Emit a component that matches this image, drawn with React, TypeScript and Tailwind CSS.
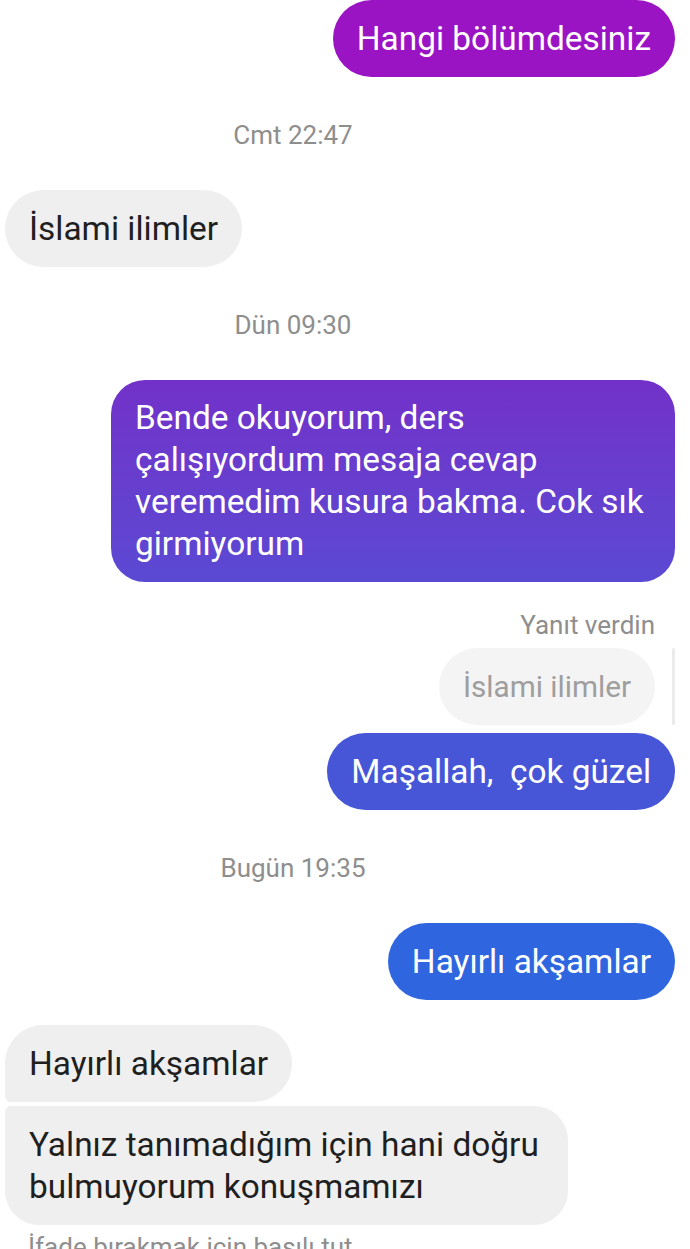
import React from "react";

function Stamp({ children }: { children: React.ReactNode }) {
  return (
    <div className="h-[113px] shrink-0 w-[586px] flex items-center justify-center text-[26px] leading-[30px] pt-[2px] text-[#8e8e8e]">
      {children}
    </div>
  );
}

export default function App() {
  return (
    <div
      className="w-[690px] h-[1249px] overflow-hidden bg-white"
      style={{ fontFamily: "Roboto, 'Noto Sans', sans-serif" }}
    >
      <div className="flex flex-col">
        <div className="flex justify-end pr-[15px]">
          <div className="rounded-full bg-[#9a14c3] text-white text-[33.4px] leading-[42px] px-[24px] py-[17.5px] whitespace-nowrap">
            Hangi bölümdesiniz
          </div>
        </div>

        <Stamp>Cmt 22:47</Stamp>

        <div className="flex justify-start pl-[5px]">
          <div className="rounded-full bg-[#efefef] text-[#1f1f1f] text-[33.4px] leading-[42px] px-[24px] py-[17.5px] whitespace-nowrap">
            İslami ilimler
          </div>
        </div>

        <Stamp>Dün 09:30</Stamp>

        <div className="flex justify-end pr-[15px]">
          <div className="w-[564px] rounded-[34px] bg-gradient-to-b from-[#7231c9] to-[#5a49d3] text-white text-[33.4px] leading-[42px] pl-[24px] pr-[16px] py-[17px]">
            Bende okuyorum, ders
            <br />
            çalışıyordum mesaja cevap
            <br />
            veremedim kusura bakma. Cok sık
            <br />
            girmiyorum
          </div>
        </div>

        <div className="flex justify-end pr-[35px] mt-[29px] text-[26px] leading-[28px] text-[#8e8e8e]">
          Yanıt verdin
        </div>

        <div className="flex justify-end items-stretch pr-[15px] mt-[9px] gap-[17px]">
          <div className="rounded-full bg-[#f4f4f4] text-[#9e9e9e] text-[29.7px] leading-[42px] px-[24px] py-[17.5px] whitespace-nowrap">
            İslami ilimler
          </div>
          <div className="w-[3px] rounded-full bg-[#ebebeb]" />
        </div>

        <div className="flex justify-end pr-[15px] mt-[8px]">
          <div className="rounded-full bg-[#4656d7] text-white text-[33.4px] leading-[42px] px-[24px] py-[17.5px] whitespace-pre">
            {"Maşallah,  çok güzel"}
          </div>
        </div>

        <Stamp>Bugün 19:35</Stamp>

        <div className="flex justify-end pr-[15px]">
          <div className="rounded-full bg-[#2f66e0] text-white text-[33.4px] leading-[42px] px-[24px] py-[17.5px] whitespace-nowrap">
            Hayırlı akşamlar
          </div>
        </div>

        <div className="flex flex-col items-start pl-[5px] mt-[25px] gap-[4px]">
          <div className="rounded-tl-[38px] rounded-tr-[38px] rounded-br-[38px] rounded-bl-[6px] bg-[#efefef] text-[#1f1f1f] text-[33.4px] leading-[42px] px-[24px] py-[17.5px] whitespace-nowrap">
            Hayırlı akşamlar
          </div>
          <div className="w-[563px] rounded-tl-[6px] rounded-tr-[34px] rounded-br-[34px] rounded-bl-[34px] bg-[#efefef] text-[#1f1f1f] text-[33.4px] leading-[42px] pl-[24px] pr-[16px] py-[17.5px]">
            Yalnız tanımadığım için hani doğru
            <br />
            bulmuyorum konuşmamızı
          </div>
        </div>

        <div className="pl-[28px] mt-[8px] text-[26px] leading-[28px] text-[#8e8e8e] whitespace-nowrap">
          İfade bırakmak için basılı tut
        </div>
      </div>
    </div>
  );
}
